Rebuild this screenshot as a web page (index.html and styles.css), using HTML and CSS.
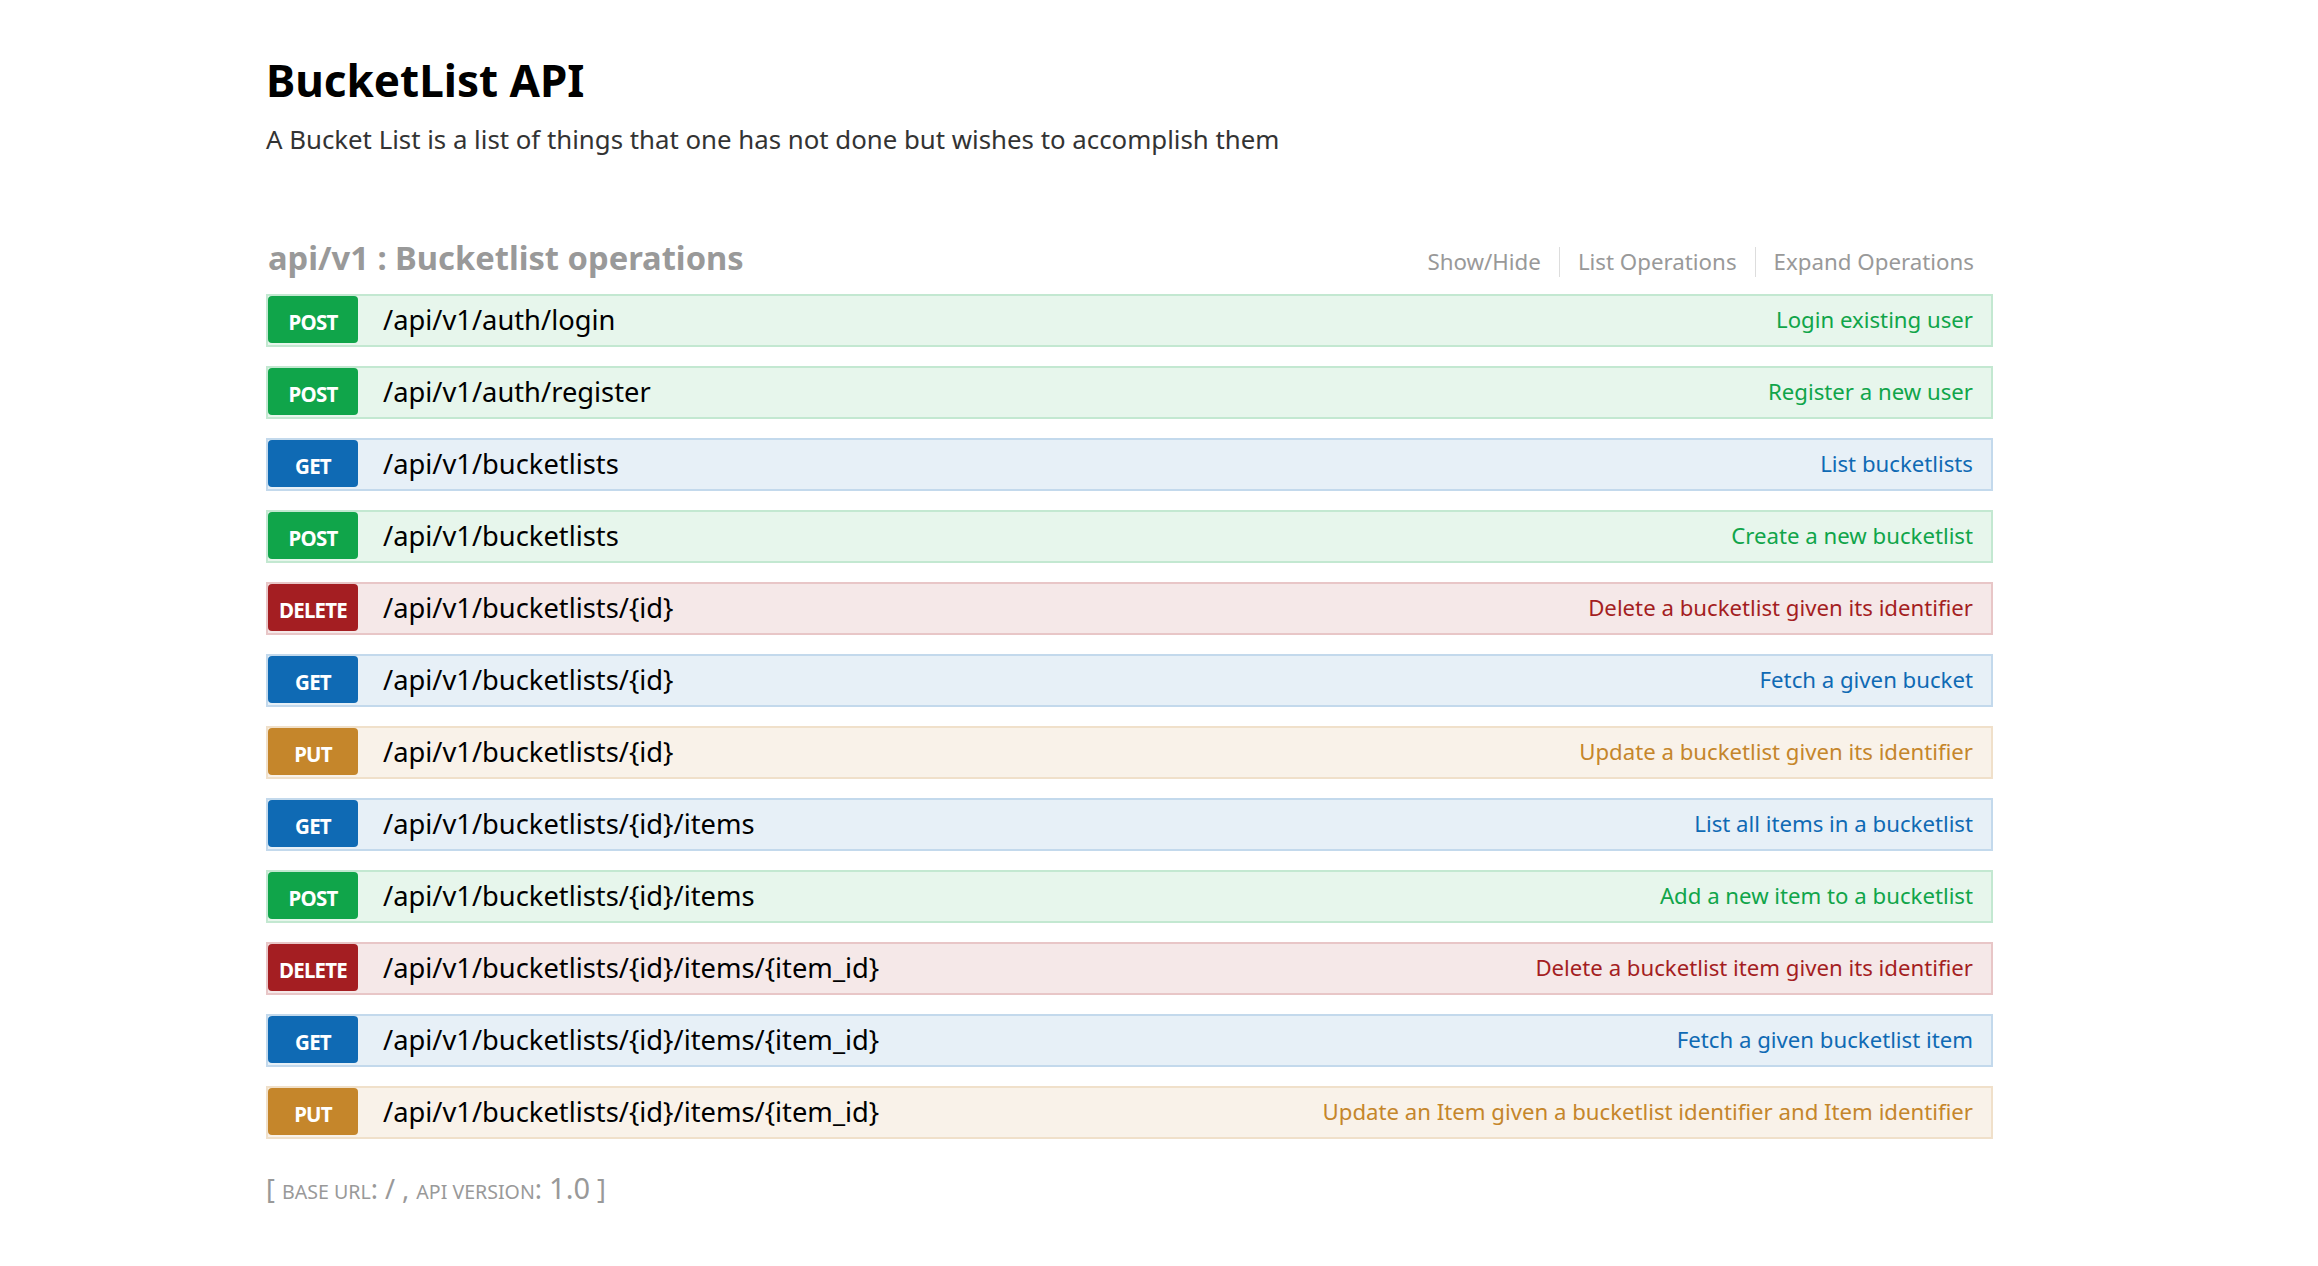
FILE: index.html
```html
<!DOCTYPE html>
<html>
<head>
<meta charset="utf-8">
<title>BucketList API</title>
<link rel="stylesheet" href="styles.css">
</head>
<body>
<div class="wrap">
  <div class="info">
    <h1 class="info-title">BucketList API</h1>
    <p class="info-desc">A Bucket List is a list of things that one has not done but wishes to accomplish them</p>
  </div>
  <div class="resource">
    <div class="resource-head">
      <h2 class="resource-title">api/v1 : Bucketlist operations</h2>
      <ul class="options">
        <li>Show/Hide</li>
        <li>List Operations</li>
        <li>Expand Operations</li>
      </ul>
    </div>
    <ul class="ops">
      <li class="op post"><span class="badge">POST</span><span class="path">/api/v1/auth/login</span><span class="summary">Login existing user</span></li>
      <li class="op post"><span class="badge">POST</span><span class="path">/api/v1/auth/register</span><span class="summary">Register a new user</span></li>
      <li class="op get"><span class="badge">GET</span><span class="path">/api/v1/bucketlists</span><span class="summary">List bucketlists</span></li>
      <li class="op post"><span class="badge">POST</span><span class="path">/api/v1/bucketlists</span><span class="summary">Create a new bucketlist</span></li>
      <li class="op delete"><span class="badge">DELETE</span><span class="path">/api/v1/bucketlists/{id}</span><span class="summary">Delete a bucketlist given its identifier</span></li>
      <li class="op get"><span class="badge">GET</span><span class="path">/api/v1/bucketlists/{id}</span><span class="summary">Fetch a given bucket</span></li>
      <li class="op put"><span class="badge">PUT</span><span class="path">/api/v1/bucketlists/{id}</span><span class="summary">Update a bucketlist given its identifier</span></li>
      <li class="op get"><span class="badge">GET</span><span class="path">/api/v1/bucketlists/{id}/items</span><span class="summary">List all items in a bucketlist</span></li>
      <li class="op post"><span class="badge">POST</span><span class="path">/api/v1/bucketlists/{id}/items</span><span class="summary">Add a new item to a bucketlist</span></li>
      <li class="op delete"><span class="badge">DELETE</span><span class="path">/api/v1/bucketlists/{id}/items/{item_id}</span><span class="summary">Delete a bucketlist item given its identifier</span></li>
      <li class="op get"><span class="badge">GET</span><span class="path">/api/v1/bucketlists/{id}/items/{item_id}</span><span class="summary">Fetch a given bucketlist item</span></li>
      <li class="op put"><span class="badge">PUT</span><span class="path">/api/v1/bucketlists/{id}/items/{item_id}</span><span class="summary">Update an Item given a bucketlist identifier and Item identifier</span></li>
    </ul>
  </div>
  <div class="footer">[ <span class="sc">base url</span>: / , <span class="sc">api version</span>: <span class="ver">1.0</span> ]</div>
</div>
</body>
</html>
```

FILE: styles.css
```css
html, body {
  margin: 0;
  padding: 0;
  background: #fff;
}
body {
  font-family: "Noto Sans", "Open Sans", "DejaVu Sans", sans-serif;
  color: #000;
}
.wrap {
  width: 1727px;
  margin: 0 0 0 266px;
  padding-top: 50px;
}
.info-title {
  margin: 0;
  font-size: 44px;
  font-weight: 700;
  line-height: 60px;
  color: #000;
}
.info-desc {
  margin: 12px 0 0 0;
  font-size: 25.8px;
  line-height: 34px;
  color: #333;
}
.resource {
  margin-top: 79px;
}
.resource-head {
  display: flex;
  align-items: center;
  justify-content: space-between;
  height: 44px;
  margin-bottom: 15px;
}
.resource-title {
  margin: 0 0 0 2px;
  font-size: 32.7px;
  font-weight: 700;
  color: #999;
}
.options {
  list-style: none;
  margin: 10px 19px 0 0;
  padding: 0;
  display: flex;
}
.options li {
  font-size: 22.3px;
  color: #999;
  padding: 0 18px;
  border-left: 1px solid #ddd;
  line-height: 30px;
}
.options li:first-child {
  border-left: none;
}
.options li:last-child {
  padding-right: 0;
}
.ops {
  list-style: none;
  margin: 0;
  padding: 0;
}
.op {
  display: flex;
  align-items: center;
  height: 47px;
  padding: 0 0 2px 0;
  border: 2px solid;
  margin-bottom: 19px;
}
.badge {
  width: 90px;
  height: 47px;
  box-sizing: border-box;
  padding-top: 5px;
  align-self: flex-start;
  border-radius: 4px;
  color: #fff;
  font-size: 20.5px;
  font-weight: 700;
  letter-spacing: -0.8px;
  display: flex;
  align-items: center;
  justify-content: center;
}
.path {
  margin-left: 25px;
  font-size: 27.3px;
  color: #000;
  flex: 1;
}
.summary {
  font-size: 22.2px;
  margin-right: 18px;
}
.op.post { background: #e7f6ec; border-color: #c3e8d1; }
.op.post .badge { background: #10a54a; }
.op.post .summary { color: #10a54a; }
.op.get { background: #e7f0f7; border-color: #c3d9ec; }
.op.get .badge { background: #0f6ab4; }
.op.get .summary { color: #0f6ab4; }
.op.delete { background: #f5e8e8; border-color: #e8c6c7; }
.op.delete .badge { background: #a41e22; }
.op.delete .summary { color: #a41e22; }
.op.put { background: #f9f2e9; border-color: #f0e0ca; }
.op.put .badge { background: #c5862b; }
.op.put .summary { color: #c5862b; }
.footer {
  margin-top: 29px;
  font-size: 27px;
  color: #999;
}
.footer .sc {
  text-transform: uppercase;
  font-size: 19.6px;
}
.footer .ver {
  font-size: 29px;
}
```
